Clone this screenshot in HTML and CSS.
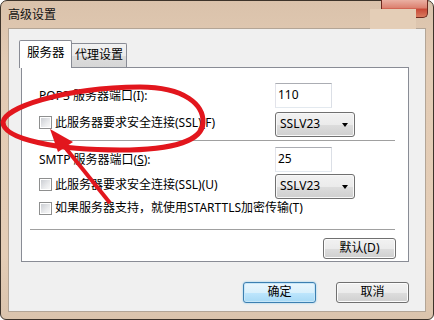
FILE: index.html
```html
<!DOCTYPE html>
<html lang="zh-CN">
<head>
<meta charset="utf-8">
<title>高级设置</title>
<link rel="stylesheet" href="styles.css">
</head>
<body>
<div class="window">
  <div class="titlebar">
    <span class="title">高级设置</span>
    <div class="close"></div>
  </div>
  <div class="patch"></div>
  <div class="client">
    <div class="tabs">
      <div class="tab active">服务器</div>
      <div class="tab">代理设置</div>
    </div>
    <div class="panel">
      <div class="row">
        <span class="label">POP3 服务器端口(I):</span>
        <div class="input">110</div>
      </div>
      <div class="row">
        <span class="check"><span class="box"></span>此服务器要求安全连接(SSL)(F)</span>
        <div class="select">SSLV23<span class="arrow"></span></div>
      </div>
      <div class="sep sep1"></div>
      <div class="row">
        <span class="label">SMTP 服务器端口(<u>S</u>):</span>
        <div class="input">25</div>
      </div>
      <div class="row row-tight">
        <span class="check"><span class="box"></span>此服务器要求安全连接(SSL)(U)</span>
        <div class="select">SSLV23<span class="arrow"></span></div>
      </div>
      <div class="row row-check">
        <span class="check"><span class="box"></span>如果服务器支持，就使用STARTTLS加密传输(T)</span>
      </div>
      <div class="sep sep2"></div>
      <div class="row-end">
        <div class="btn">默认(D)</div>
      </div>
    </div>
    <div class="buttons">
      <div class="btn default">确定</div>
      <div class="btn">取消</div>
    </div>
  </div>
  <svg class="annot" width="434" height="320" viewBox="0 0 434 320">
    <path d="M 3,122 C 5,108 60,88 140,87 C 185,87 204,105 203,123 C 202,140 175,150 120,150 C 60,150 3,140 3,122 Z" fill="none" stroke="#e2161d" stroke-width="5"/>
    <line x1="110" y1="203" x2="64" y2="146" stroke="#e2161d" stroke-width="4"/>
    <polygon points="50,129 58,152 73,142" fill="#e2161d"/>
  </svg>
</div>
</body>
</html>
```

FILE: styles.css
```css
html, body {
  margin: 0;
  padding: 0;
  width: 434px;
  height: 320px;
  overflow: hidden;
  background: #ffffff;
}

.window {
  position: relative;
  box-sizing: border-box;
  width: 434px;
  height: 320px;
  border: 1px solid #3d332a;
  border-radius: 7px 7px 6px 6px;
  background: linear-gradient(180deg, #dac2ab 0%, #e3ccb5 20%, #e4cdb6 80%, #dbc4ad 100%);
  font-family: "Noto Sans", "Noto Sans CJK SC", sans-serif;
  font-size: 12px;
  line-height: 16px;
  color: #000;
}

.titlebar {
  display: flex;
  align-items: flex-start;
  height: 27px;
}

.title {
  margin: 6px 0 0 7px;
  font-size: 12px;
  color: #111;
}

.close {
  margin: -1px 5px 0 auto;
  width: 47px;
  height: 18px;
  box-sizing: border-box;
  border: 1px solid #6e2a20;
  border-top: none;
  border-radius: 0 0 5px 5px;
  background: linear-gradient(180deg, #eab0a3 0%, #dc8271 45%, #c84a38 55%, #d97a5e 100%);
}

.patch {
  position: absolute;
  left: 369px;
  top: 8px;
  width: 46px;
  height: 20px;
  background: #e4ceb7;
}

.client {
  box-sizing: border-box;
  margin: 0 7px;
  height: 284px;
  border: 1px solid #b3a596;
  background: #f0f0f0;
  padding: 11px 16px 0 10px;
}

.tabs {
  display: flex;
  align-items: flex-end;
  height: 27px;
}

.tab {
  box-sizing: border-box;
  height: 24px;
  padding: 3px 0 0 3px;
  width: 55px;
  border: 1px solid #898c95;
  border-bottom: none;
  border-left: none;
  background: linear-gradient(180deg, #f2f2f2 0%, #ebebeb 50%, #dddddd 51%, #d6d6d6 100%);
  border-radius: 0 2px 0 0;
}

.tab.active {
  position: relative;
  z-index: 1;
  width: 53px;
  height: 28px;
  margin-bottom: -1px;
  padding: 4px 0 0 7px;
  border-left: 1px solid #898c95;
  background: #ffffff;
  border-radius: 2px 2px 0 0;
  font-size: 12.5px;
}

.panel {
  box-sizing: border-box;
  margin-left: 2px;
  height: 195px;
  border: 1px solid #898c95;
  background: #ffffff;
  padding: 15px 13px 0 8px;
}

.row {
  display: flex;
  align-items: center;
  height: 25px;
  padding-left: 9px;
  margin-bottom: 4px;
}

.row-tight {
  margin-top: -2px;
  margin-bottom: 1px;
}

.row-check {
  height: 16px;
  margin-bottom: 0;
}

.label,
.check {
  width: 236px;
  flex: none;
  white-space: nowrap;
}

.check {
  display: flex;
  align-items: center;
  margin-top: -4px;
}

.row-check .check {
  margin-top: 0;
}

.box {
  position: relative;
  box-sizing: border-box;
  width: 13px;
  height: 13px;
  margin-right: 3px;
  border: 1px solid #8e8f8f;
  background: #ffffff;
  flex: none;
}

.box::after {
  content: "";
  position: absolute;
  left: 1px;
  top: 1px;
  width: 9px;
  height: 9px;
  background: linear-gradient(135deg, #cbced3 0%, #e9eaec 60%, #f8f8f8 100%);
}

.input {
  box-sizing: border-box;
  width: 57px;
  height: 25px;
  padding: 3px 0 0 2px;
  border: 1px solid #abadb3;
  border-color: #abadb3 #dbdfe6 #e3e9ef #e2e3ea;
  background: #ffffff;
}

.select {
  position: relative;
  box-sizing: border-box;
  width: 80px;
  height: 25px;
  padding: 3px 0 0 4px;
  border: 1px solid #707070;
  border-radius: 3px;
  background: linear-gradient(180deg, #f2f2f2 0%, #ebebeb 50%, #dddddd 51%, #cfcfcf 100%);
  box-shadow: inset 0 0 0 1px #f8f8f8;
}

.arrow {
  position: absolute;
  right: 6px;
  top: 10px;
  width: 0;
  height: 0;
  border-left: 3.5px solid transparent;
  border-right: 3.5px solid transparent;
  border-top: 4px solid #000;
}

.sep {
  height: 1px;
  background: #a0a0a0;
}

.sep1 {
  margin: -1px 0 6px 0;
}

.sep2 {
  margin-top: 13px;
}

.row-end {
  display: flex;
  justify-content: flex-end;
  margin-top: 8px;
  margin-right: -1px;
}

.btn {
  box-sizing: border-box;
  width: 73px;
  height: 21px;
  border: 1px solid #707070;
  border-radius: 3px;
  background: linear-gradient(180deg, #f2f2f2 0%, #ebebeb 50%, #dddddd 51%, #cfcfcf 100%);
  box-shadow: inset 0 0 0 1px #fcfcfc;
  text-align: center;
  line-height: 18px;
}

.btn.default {
  border-color: #3c7fb1;
  background: linear-gradient(180deg, #eaf6fd 0%, #d9f0fc 50%, #bee6fd 51%, #a7d9f5 100%);
  box-shadow: inset 0 0 0 1px #c6e6f8, 0 0 2px #7ec4ea;
}

.buttons {
  display: flex;
  justify-content: flex-end;
  gap: 20px;
  margin-top: 20px;
}

.annot {
  position: absolute;
  left: -1px;
  top: -1px;
  pointer-events: none;
}
```
